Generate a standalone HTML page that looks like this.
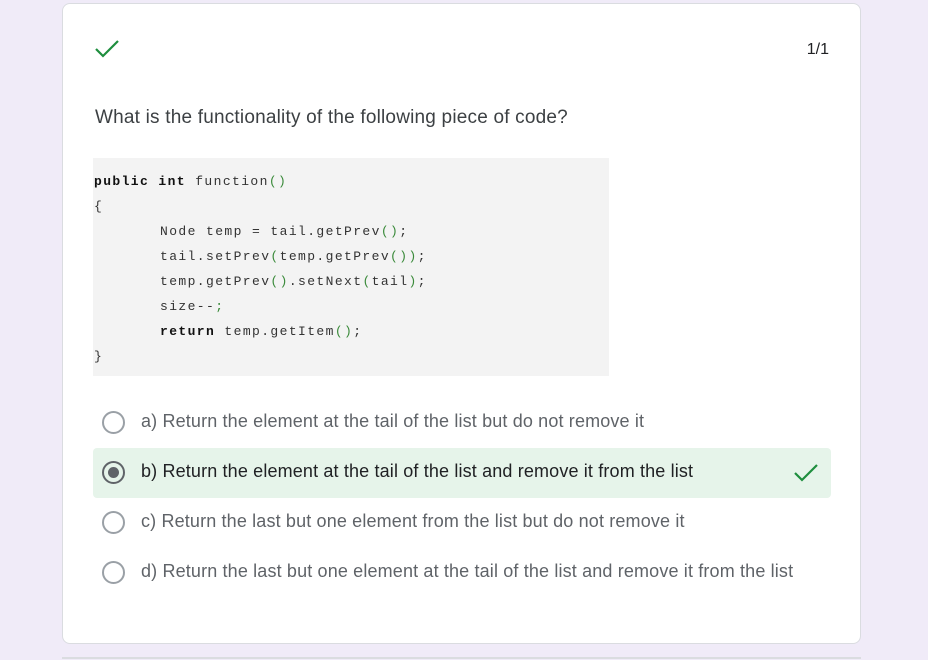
<!DOCTYPE html>
<html><head><style>
body{margin:0;width:928px;height:660px;background:#f0ebf8;font-family:"Liberation Sans",sans-serif;position:relative;overflow:hidden}
.card{position:absolute;left:62px;top:3px;width:797px;height:639px;background:#fff;border:1px solid #dadce0;border-radius:8px}
.abs{position:absolute}
.q{left:32px;top:103px;font-size:19px;letter-spacing:0.2px;color:#3c4043}
.code{left:30px;top:154px;width:516px;height:218px;background:#f3f3f3}
.code div{position:absolute;font-family:"Liberation Mono",monospace;font-size:13px;letter-spacing:1.4px;color:#333;white-space:pre}
.k{font-weight:bold;color:#111}
.g{color:#3a8a3a}
.opt{position:absolute;left:30px;width:738px;height:50px}
.radio{position:absolute;left:9px;top:13px;width:23px;height:23px;border:2px solid #9aa0a6;border-radius:50%;box-sizing:border-box}
.opt span{position:absolute;left:48px;top:13px;font-size:18px;letter-spacing:0.15px;color:#5f6368}
</style></head><body>
<div class="card">
<svg class="abs" style="left:31px;top:34px" width="26" height="22" viewBox="0 0 26 22"><path d="M2 11 L9 18 L24 3" fill="none" stroke="#1e8e3e" stroke-width="2.2"/></svg>
<div class="abs" style="right:31px;top:37px;font-size:16px;color:#202124">1/1</div>
<div class="abs q">What is the functionality of the following piece of code?</div>
<div class="abs code">
<div style="left:1px;top:16px"><span class="k">public int</span> function<span class="g">()</span></div>
<div style="left:1px;top:41px" class="g">{</div>
<div style="left:67px;top:66px">Node temp = tail.getPrev<span class="g">()</span>;</div>
<div style="left:67px;top:91px">tail.setPrev<span class="g">(</span>temp.getPrev<span class="g">())</span>;</div>
<div style="left:67px;top:116px">temp.getPrev<span class="g">()</span>.setNext<span class="g">(</span>tail<span class="g">)</span>;</div>
<div style="left:67px;top:141px">size--<span class="g">;</span></div>
<div style="left:67px;top:166px"><span class="k">return</span> temp.getItem<span class="g">()</span>;</div>
<div style="left:1px;top:191px" class="g">}</div>
</div>
<div class="opt" style="top:394px"><div class="radio"></div><span>a) Return the element at the tail of the list but do not remove it</span></div>
<div class="opt" style="top:444px;background:#e6f4ea;border-radius:4px"><div class="radio" style="border-color:#5f6368"><div style="position:absolute;left:4px;top:4px;width:11px;height:11px;border-radius:50%;background:#5f6368"></div></div><span style="color:#202124">b) Return the element at the tail of the list and remove it from the list</span>
<svg class="abs" style="left:700px;top:14px" width="26" height="22" viewBox="0 0 26 22"><path d="M2 11 L9 18 L24 3" fill="none" stroke="#1e8e3e" stroke-width="2.2"/></svg></div>
<div class="opt" style="top:494px"><div class="radio"></div><span>c) Return the last but one element from the list but do not remove it</span></div>
<div class="opt" style="top:544px"><div class="radio"></div><span>d) Return the last but one element at the tail of the list and remove it from the list</span></div>
</div>
<div class="abs" style="left:62px;top:657px;width:799px;height:2px;background:#dadce0"></div>
</body></html>
